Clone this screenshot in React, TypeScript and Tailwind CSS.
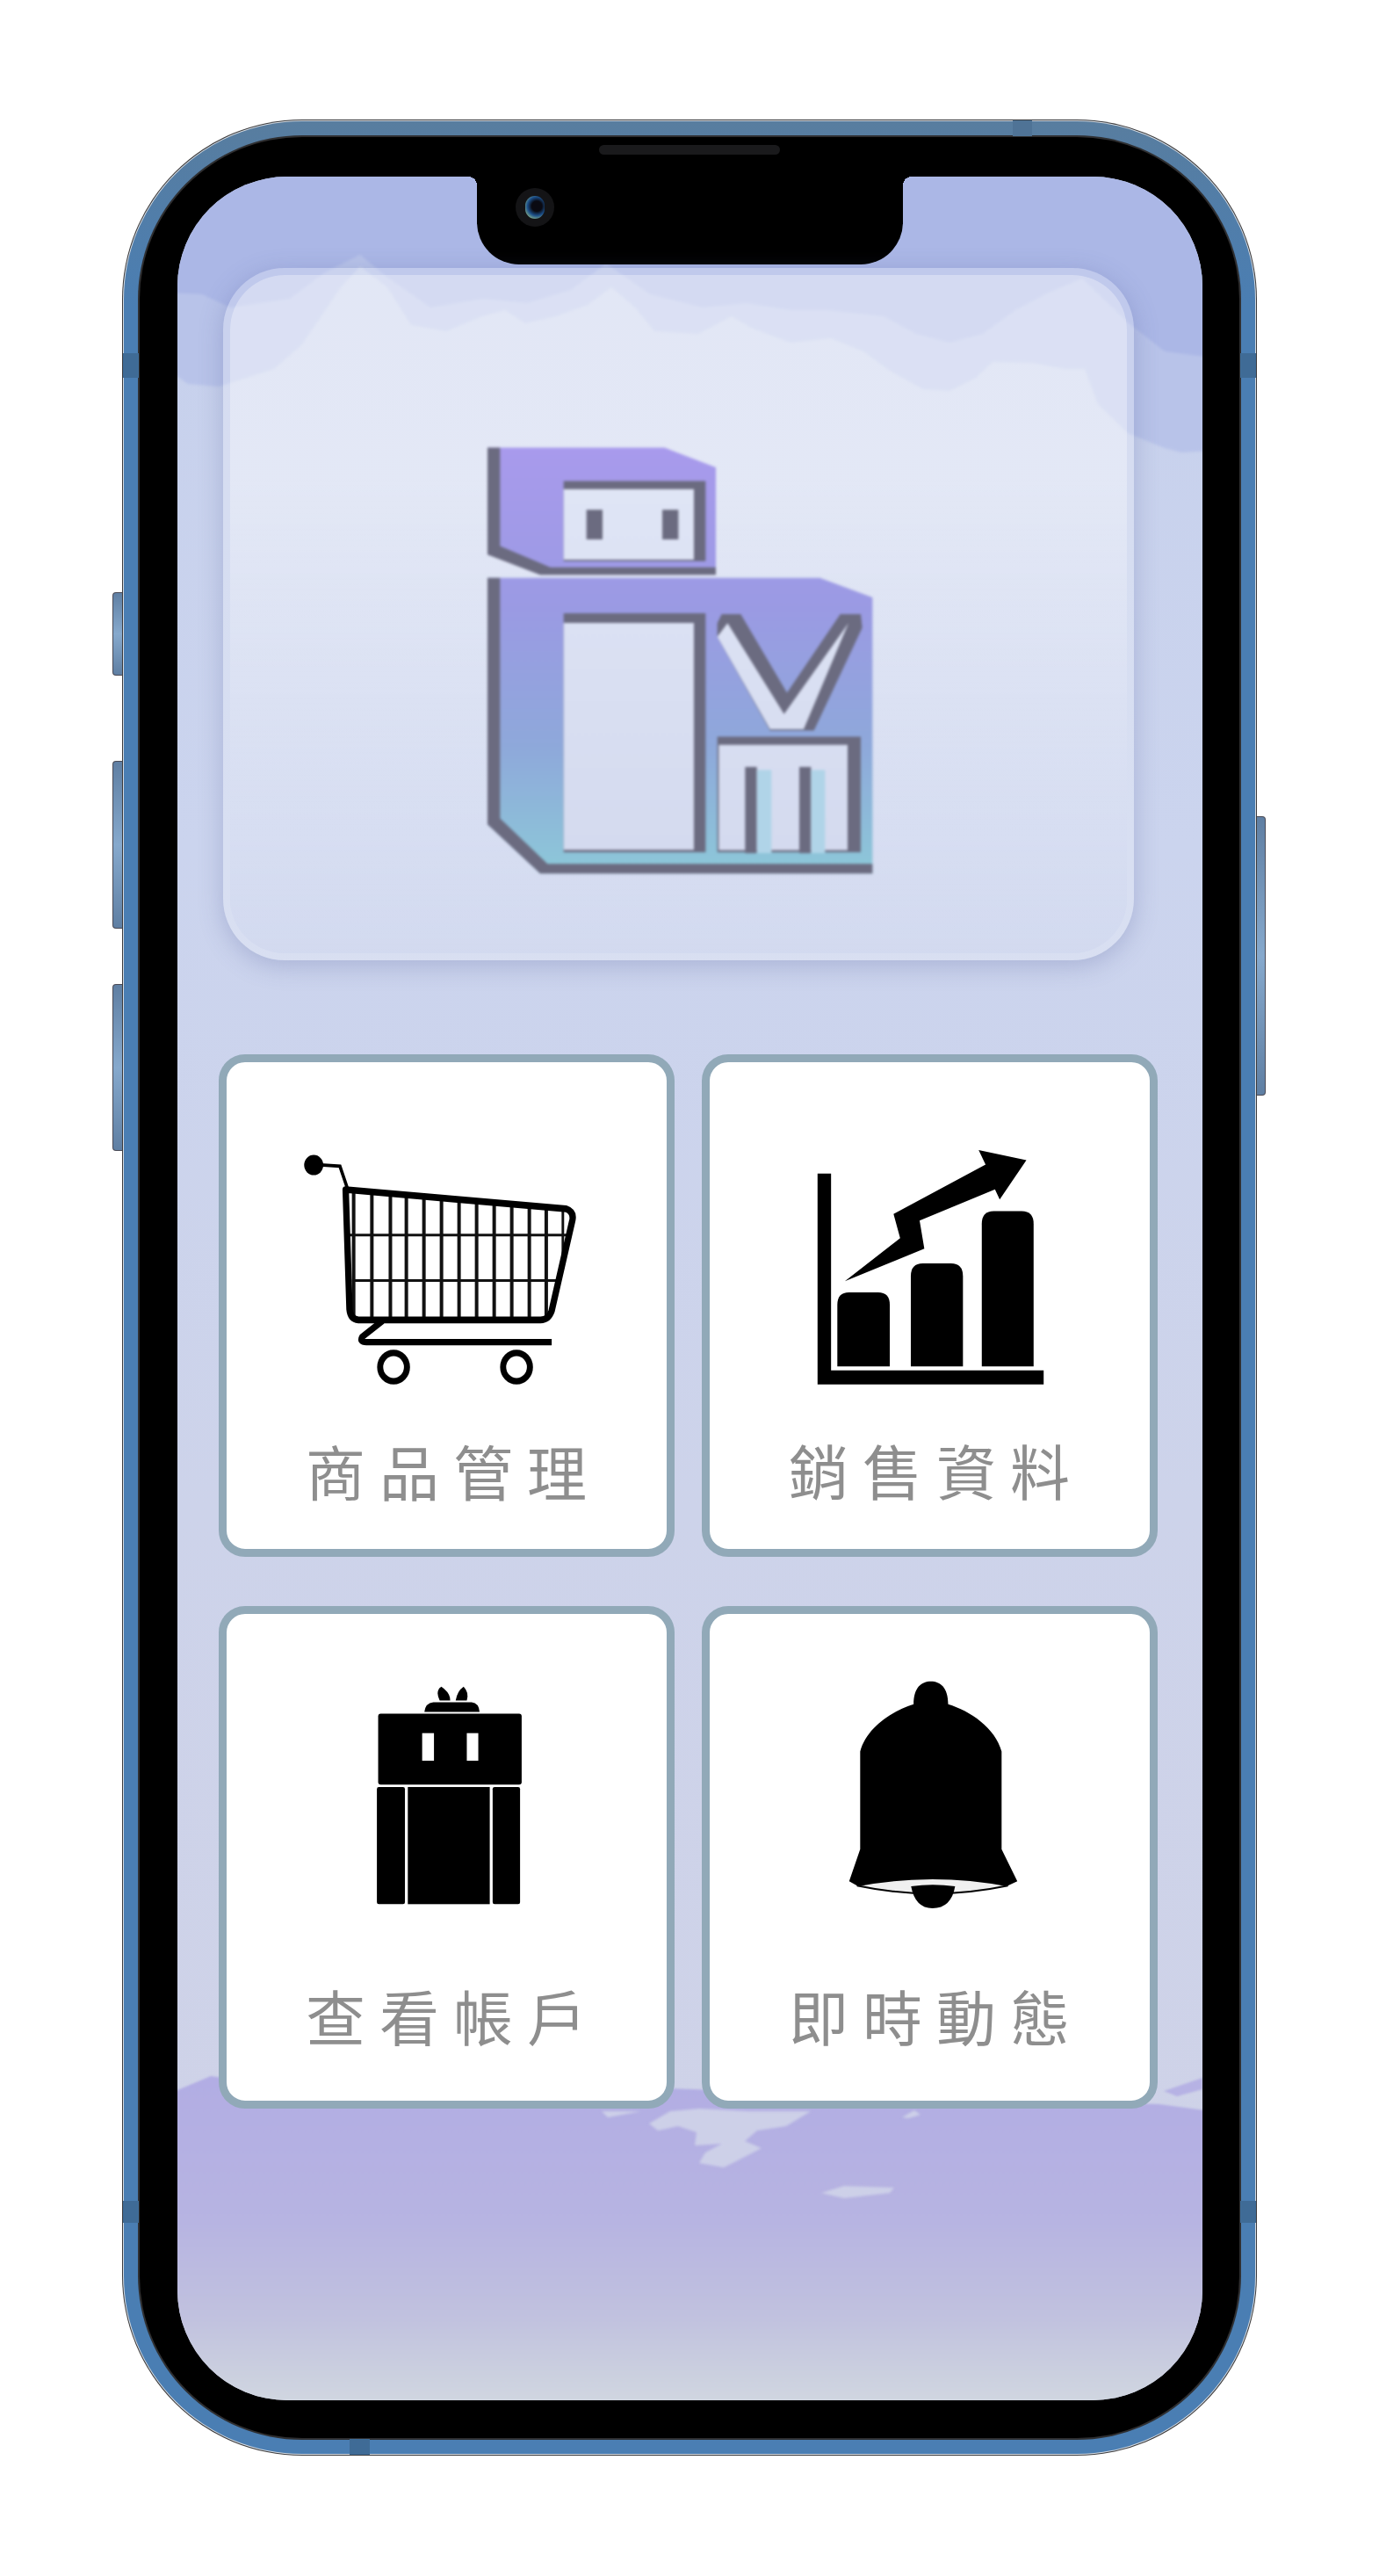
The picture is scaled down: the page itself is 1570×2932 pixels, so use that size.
import React from "react";

const CartIcon = () => (
  <svg viewBox="300 340 880 710" preserveAspectRatio="none" className="w-[320px] h-[272px] blur-[0.5px]">
    <circle cx="350" cy="382" r="30" fill="#000" />
    <path d="M350 380 L432 385 L455 450" fill="none" stroke="#000" strokeWidth="10" />
    {[475, 532, 590, 640, 695, 750, 805, 860, 915, 970, 1025, 1078].map((x) => (
      <line key={x} x1={x} y1={455 + ((x - 450) * 57) / 690} x2={x} y2="835" stroke="#111" strokeWidth="11" />
    ))}
    <line x1="1130" y1="515" x2="1130" y2="669" stroke="#111" strokeWidth="8" />
    <line x1="458" y1="590" x2="1150" y2="590" stroke="#111" strokeWidth="8" />
    <line x1="470" y1="725" x2="1118" y2="725" stroke="#111" strokeWidth="8" />
    <path
      d="M450 455 L1140 512 Q1165 520 1160 545 L1095 815 Q1085 842 1060 842 L490 842 Q465 840 462 810 Z"
      fill="none"
      stroke="#000"
      strokeWidth="20"
      strokeLinejoin="round"
    />
    <path d="M565 845 L502 892 Q492 908 515 908 L1095 908" fill="none" stroke="#000" strokeWidth="19" />
    <circle cx="600" cy="982" r="42" fill="none" stroke="#000" strokeWidth="19" />
    <circle cx="985" cy="982" r="42" fill="none" stroke="#000" strokeWidth="19" />
  </svg>
);

const ChartIcon = () => (
  <svg viewBox="390 330 730 705" preserveAspectRatio="none" className="w-[261px] h-[270px] blur-[0.5px]">
    <path d="M395 405 H438 V990 H1115 V1032 H395 Z" fill="#000" />
    <path d="M458 978 V795 Q458 758 495 758 H588 Q625 758 625 795 V978 Z" fill="#000" />
    <path d="M692 978 V710 Q692 672 730 672 H820 Q858 672 858 710 V978 Z" fill="#000" />
    <path d="M918 978 V555 Q918 517 956 517 H1045 Q1083 517 1083 555 V978 Z" fill="#000" />
    <path d="M482 725 L658 597 L637 525 L930 378 L908 335 L1060 365 L975 482 L960 452 L720 545 L735 628 Z" fill="#000" />
  </svg>
);

const AccountIcon = () => (
  <svg viewBox="545 285 460 655" preserveAspectRatio="none" className="w-[167px] h-[251px] blur-[0.5px]">
    <path d="M745 328 Q730 300 750 287 Q778 305 778 328 Z" fill="#000" />
    <path d="M795 328 Q800 300 820 287 Q838 305 830 328 Z" fill="#000" />
    <path d="M697 362 Q700 335 725 333 H845 Q868 335 870 362 Z" fill="#000" />
    <rect x="552" y="367" width="450" height="211" rx="8" fill="#000" />
    <rect x="690" y="425" width="37" height="82" fill="#fff" />
    <rect x="830" y="425" width="36" height="82" fill="#fff" />
    <rect x="548" y="585" width="88" height="348" rx="6" fill="#000" />
    <rect x="645" y="585" width="257" height="348" fill="#000" />
    <rect x="911" y="585" width="86" height="348" rx="6" fill="#000" />
  </svg>
);

const BellIcon = () => (
  <svg viewBox="490 270 545 675" preserveAspectRatio="none" className="w-[195px] h-[259px] blur-[0.5px]">
    <path d="M520 878 Q760 925 1000 878 Q760 835 520 878 Z" fill="#f0f0f0" stroke="#000" strokeWidth="5" />
    <path
      d="M700 340 C700 290 725 272 755 272 C785 272 810 290 810 340 C880 360 960 410 980 480 L980 770 L1030 865 L1000 878 Q760 835 520 878 L495 865 L530 770 L530 480 C550 410 630 360 700 340 Z"
      fill="#000"
    />
    <path d="M692 880 Q760 870 832 880 Q820 945 760 945 Q705 945 692 880 Z" fill="#000" />
  </svg>
);

const Logo = () => (
  <svg viewBox="0 0 1560 1568" preserveAspectRatio="none" className="w-[520px] h-[540px] blur-[1.5px]">
    <defs>
      <linearGradient id="logoFill" x1="0" y1="110" x2="0" y2="1525" gradientUnits="userSpaceOnUse">
        <stop offset="0" stopColor="#a89aec" />
        <stop offset="0.38" stopColor="#9a9ae3" />
        <stop offset="0.7" stopColor="#8ea8da" />
        <stop offset="1" stopColor="#8cc8d8" />
      </linearGradient>
      <linearGradient id="logoLight" x1="0" y1="110" x2="0" y2="1525" gradientUnits="userSpaceOnUse">
        <stop offset="0" stopColor="#e0e6f6" />
        <stop offset="1" stopColor="#d3d9ee" />
      </linearGradient>
    </defs>
    {/* head */}
    <path d="M165 115 L770 115 L945 180 L945 535 L345 535 L165 465 Z" fill="url(#logoFill)" />
    <path d="M165 115 H208 V440 L380 510 H945 V535 H345 L165 468 Z" fill="#6b6b80" />
    <rect x="425" y="225" width="485" height="265" fill="#6b6b80" />
    <rect x="425" y="252" width="445" height="233" fill="url(#logoLight)" />
    <rect x="503" y="320" width="55" height="98" fill="#6b6b80" />
    <rect x="762" y="320" width="55" height="98" fill="#6b6b80" />
    {/* body */}
    <path d="M165 545 L1300 545 L1480 610 L1480 1522 L345 1522 L165 1360 Z" fill="url(#logoFill)" />
    <path d="M165 545 H208 V1340 L370 1490 H1480 V1522 H345 L165 1360 Z" fill="#6b6b80" />
    <rect x="425" y="662" width="485" height="790" fill="#6b6b80" />
    <rect x="425" y="694" width="445" height="750" fill="url(#logoLight)" />
    {/* V */}
    <polygon points="950,695 965,665 1030,665 1188,925 1370,665 1440,665 1445,710 1280,1050 1130,1050 950,740" fill="#6b6b80" />
    <polygon points="950,740 985,695 1178,995 1398,695 1245,1045 1130,1045" fill="url(#logoLight)" />
    {/* M */}
    <rect x="950" y="1070" width="490" height="382" fill="#6b6b80" />
    <rect x="955" y="1097" width="440" height="348" fill="url(#logoLight)" />
    <rect x="1045" y="1170" width="40" height="285" fill="#6b6b80" />
    <rect x="1085" y="1180" width="50" height="275" fill="#b0d4e8" />
    <rect x="1230" y="1170" width="40" height="285" fill="#6b6b80" />
    <rect x="1270" y="1180" width="48" height="275" fill="#b0d4e8" />
  </svg>
);

const menu = [
  { label: "商品管理", icon: <CartIcon />, iconClass: "ml-[81px] mt-[101px]", labelClass: "mt-[58px]" },
  { label: "銷售資料", icon: <ChartIcon />, iconClass: "ml-[121px] mt-[98px]", labelClass: "mt-[62px]" },
  { label: "查看帳戶", icon: <AccountIcon />, iconClass: "ml-[170px] mt-[82px]", labelClass: "mt-[90px]" },
  { label: "即時動態", icon: <BellIcon />, iconClass: "ml-[157px] mt-[76px]", labelClass: "mt-[88px]" },
];

const sideButton = "w-full rounded-l-[4px] border border-r-0 border-[#4a4a55] bg-[linear-gradient(180deg,#5f7fa3,#86a9cd_50%,#5f7fa3)]";

const App: React.FC = () => {
  return (
    <div className="w-[1570px] h-[2932px] bg-white flex items-start pl-[128px] pt-[136px] font-['Noto_Sans_CJK_TC',sans-serif]">
      {/* volume buttons */}
      <div className="w-[11px] flex flex-col pt-[538px]">
        <div className={`${sideButton} h-[95px]`} />
        <div className={`${sideButton} h-[191px] mt-[97px]`} />
        <div className={`${sideButton} h-[190px] mt-[63px]`} />
      </div>

      <div className="relative w-[1292px] h-[2659px]">
        {/* frame */}
        <div className="h-full rounded-[205px] bg-[#3a3a3c] p-px">
          <div className="h-full rounded-[204px] bg-[#d5dbe2] p-px">
            <div className="h-full rounded-[203px] bg-[linear-gradient(180deg,#587d9f,#4a7eb3_8%,#4a7eb3)] p-[16px]">
              <div className="h-full rounded-[187px] bg-[#2f2f31] p-[2px]">
                <div className="h-full rounded-[185px] bg-black pt-[9px] flex flex-col items-center">
                  <div className="w-[206px] h-[11px] mb-[25px] rounded-full bg-[#1a1a1c]" />
                  <Screen />
                </div>
              </div>
            </div>
          </div>
        </div>

        {/* antenna bands */}
        <div className="absolute left-[1px] top-[266px] w-[18px] h-[28px] bg-[#3f6b96]" />
        <div className="absolute right-[1px] top-[266px] w-[18px] h-[28px] bg-[#3f6b96]" />
        <div className="absolute left-[1px] top-[2369px] w-[18px] h-[25px] bg-[#3f6b96]" />
        <div className="absolute right-[1px] top-[2369px] w-[18px] h-[25px] bg-[#3f6b96]" />
        <div className="absolute left-[1014px] top-[1px] w-[22px] h-[18px] bg-[#4f7396]" />
        <div className="absolute left-[259px] bottom-[1px] w-[23px] h-[18px] bg-[#3f6b96]" />
      </div>

      {/* power button */}
      <div className="w-[10px] mt-[793px] h-[318px] rounded-r-[4px] border border-l-0 border-[#4a4a55] bg-[linear-gradient(180deg,#5f7fa3,#86a9cd_50%,#5f7fa3)]" />
    </div>
  );
};

const Screen: React.FC = () => {
  return (
    <div className="relative w-[1167px] h-[2531px] rounded-[125px] overflow-hidden bg-[linear-gradient(180deg,#c6d0ec_0%,#cbd4ee_30%,#cdd3ea_60%,#cfd2e7_100%)]">
      {/* watercolour background */}
      <svg viewBox="202 201 1167 2531" className="absolute inset-0 w-full h-full">
        <defs>
          <linearGradient id="bottomWash" x1="0" y1="2360" x2="0" y2="2732" gradientUnits="userSpaceOnUse">
            <stop offset="0" stopColor="#b2ade4" />
            <stop offset="0.45" stopColor="#b7b4e2" />
            <stop offset="0.75" stopColor="#c1c2df" />
            <stop offset="1" stopColor="#d0d6e0" />
          </linearGradient>
        </defs>
        <g className="blur-[1.5px]">
          <path
            d="M190 190 H1380 V513 L1345 515 L1326 510 L1284 493 L1250 460 L1235 420 L1213 420 L1175 413 L1130 412 L1111 430 L1081 445 L1051 443 L1013 422 L983 400 L946 385 L900 390 L855 373 L833 360 L795 380 L745 377 L723 350 L696 327 L669 347 L633 360 L598 368 L575 353 L549 360 L508 377 L468 370 L441 327 L410 303 L388 327 L361 367 L343 393 L312 420 L249 440 L214 437 L190 420 Z"
            fill="#b8c3e9"
          />
          <path
            d="M190 190 H1380 V407 L1326 400 L1284 367 L1232 317 L1194 333 L1156 353 L1119 380 L1081 390 L1043 380 L1006 360 L942 353 L900 353 L850 345 L800 350 L740 335 L690 300 L650 330 L600 345 L550 340 L490 350 L440 315 L410 290 L370 310 L330 340 L262 350 L230 335 L190 333 Z"
            fill="#abb7e6"
          />
        </g>
        <path
          d="M190 2384 L240 2363 L300 2372 L700 2375 L1000 2385 L1320 2395 L1380 2403 V2740 H190 Z"
          fill="url(#bottomWash)"
          className="blur-[1px]"
        />
        <g fill="#cdd0e8" className="blur-[1.5px]">
          <path d="M739 2417 L763 2403 L796 2400 L852 2403 L923 2403 L895 2420 L862 2425 L848 2437 L867 2445 L838 2460 L824 2467 L796 2462 L803 2450 L822 2440 L791 2442 L793 2427 L772 2420 L749 2425 Z" />
          <path d="M935 2496 L961 2488 L1018 2490 L1013 2496 L961 2502 Z" />
          <path d="M685 2403 L730 2403 L692 2410 Z" />
          <path d="M1027 2410 L1041 2402 L1048 2407 L1034 2411 Z" />
        </g>
        <path d="M1325 2380 L1369 2365 L1369 2378 L1340 2386 Z" fill="#b6b2e4" className="blur-[1px]" />
      </svg>

      {/* notch */}
      <div className="absolute left-[341px] top-0 w-[485px] h-[100px] rounded-b-[48px] bg-black pl-[44px] pt-[13px]">
        <div className="w-[44px] h-[44px] rounded-full bg-[#141416] flex items-center justify-center">
          <div className="w-[22px] h-[26px] rounded-full bg-[radial-gradient(circle_at_60%_45%,#0a0a12_30%,#1b4f8a_55%,#6f9c8c_75%)]" />
        </div>
      </div>
      <div className="absolute left-[331px] top-0 w-[10px] h-[10px] bg-[radial-gradient(circle_at_0_100%,transparent_10px,black_10px)]" />
      <div className="absolute left-[826px] top-0 w-[10px] h-[10px] bg-[radial-gradient(circle_at_100%_100%,transparent_10px,black_10px)]" />

      <div className="relative pt-[104px]">
        {/* hero logo card */}
        <div className="ml-[52px] w-[1037px] h-[788px] rounded-[70px] border-[8px] border-white/25 bg-clip-padding bg-[linear-gradient(180deg,rgba(255,255,255,0.49),rgba(255,255,255,0.49)_30%,rgba(255,255,255,0.15))] shadow-[0_6px_28px_rgba(80,90,150,0.28)] pt-[157px] pl-[238px]">
          <Logo />
        </div>

        {/* menu grid */}
        <div className="ml-[47px] mt-[107px] w-[1070px] grid grid-cols-[519px_519px] grid-rows-[572px_572px] gap-x-[31px] gap-y-[56px]">
          {menu.map((item) => (
            <button
              key={item.label}
              className="flex flex-col items-start rounded-[30px] border-[9px] border-[#91a9b8] bg-white"
            >
              <div className={item.iconClass}>{item.icon}</div>
              <div
                className={`${item.labelClass} w-full text-center text-[68px] leading-[67px] font-normal tracking-[16px] pl-[16px] text-[#8e8e8e]`}
              >
                {item.label}
              </div>
            </button>
          ))}
        </div>
      </div>
    </div>
  );
};

export default App;
